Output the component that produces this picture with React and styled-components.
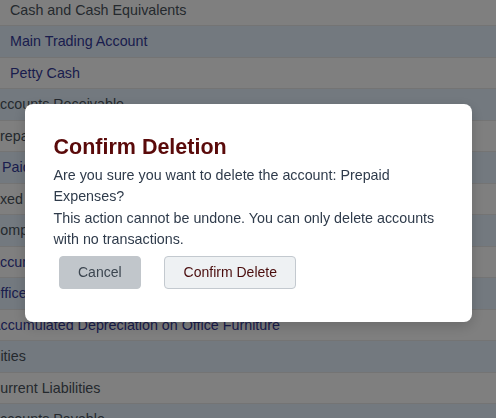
import React from 'react';
import styled, { createGlobalStyle } from 'styled-components';

const GlobalStyle = createGlobalStyle`
  html, body {
    margin: 0;
    padding: 0;
    overflow: hidden;
    background: #ffffff;
    font-family: "Liberation Sans", Arial, sans-serif;
  }
`;

const Page = styled.div`
  height: 418px;
  overflow: hidden;
`;

const AccountList = styled.ul`
  list-style: none;
  margin: -5.5px 0 0;
  padding: 0;
`;

const AccountRow = styled.li`
  box-sizing: border-box;
  height: 31.5px;
  padding: 6px 0;
  text-indent: ${(p) => p.$indent}px;
  border-bottom: 1px solid #e8e8e8;
  background: ${(p) => (p.$alt ? '#e6f3ff' : '#ffffff')};
  color: ${(p) => (p.$leaf ? '#343a9a' : '#4a535c')};
  font-size: 14.3px;
  line-height: 18.5px;
  white-space: nowrap;
  overflow: hidden;
`;

const Overlay = styled.div`
  position: fixed;
  inset: 0;
  display: flex;
  align-items: center;
  justify-content: center;
  padding-top: 7px;
  box-sizing: border-box;
  background: rgba(0, 0, 0, 0.5);
`;

const Dialog = styled.div`
  box-sizing: border-box;
  width: 447px;
  padding: 30px 29px 33px;
  background: #ffffff;
  border-radius: 8px;
  box-shadow: 0 4px 14px rgba(0, 0, 0, 0.18);
`;

const Title = styled.h2`
  margin: 0 0 5px;
  font-size: 21.5px;
  line-height: 26px;
  font-weight: bold;
  color: #5a0a0a;
`;

const Message = styled.p`
  margin: 0;
  font-size: 14.3px;
  line-height: 21.5px;
  color: #2f3b4b;
`;

const Actions = styled.div`
  display: flex;
  gap: 23px;
  margin-top: 5px;
  padding-left: 5px;
`;

const Button = styled.button`
  box-sizing: border-box;
  height: 33px;
  padding: 0 18.5px;
  font-family: "Liberation Sans", Arial, sans-serif;
  font-size: 14px;
  border-radius: 4px;
  cursor: pointer;
  border: 1px solid ${(p) => (p.$primary ? '#c3c9cf' : '#c1c6cb')};
  background: ${(p) => (p.$primary ? '#eef1f3' : '#c1c6cb')};
  color: ${(p) => (p.$primary ? '#4a0d0d' : '#3c4650')};
`;

const accounts = [
  { name: 'Cash and Cash Equivalents', indent: 10 },
  { name: 'Main Trading Account', indent: 10, leaf: true },
  { name: 'Petty Cash', indent: 10, leaf: true },
  { name: 'Accounts Receivable', indent: -9.5 },
  { name: 'Prepaid Expenses', indent: -9.5 },
  { name: 'Paid in Advance', indent: 2, leaf: true },
  { name: 'Fixed Assets', indent: -12 },
  { name: 'Computer Equipment', indent: -10 },
  { name: 'Accumulated Depreciation on Computer Equipment', indent: -9.5, leaf: true },
  { name: 'Office Furniture', indent: -10.5, leaf: true },
  { name: 'Accumulated Depreciation on Office Furniture', indent: -9, leaf: true },
  { name: 'Liabilities', indent: -33 },
  { name: 'Current Liabilities', indent: -10 },
  { name: 'Accounts Payable', indent: -9.5 },
];

export default function App() {
  return (
    <Page>
      <GlobalStyle />
      <AccountList>
        {accounts.map((a, i) => (
          <AccountRow key={a.name} $indent={a.indent} $alt={i % 2 === 1} $leaf={a.leaf}>
            {a.name}
          </AccountRow>
        ))}
      </AccountList>
      <Overlay>
        <Dialog>
          <Title>Confirm Deletion</Title>
          <Message>Are you sure you want to delete the account: Prepaid Expenses?</Message>
          <Message>This action cannot be undone. You can only delete accounts with no transactions.</Message>
          <Actions>
            <Button>Cancel</Button>
            <Button $primary>Confirm Delete</Button>
          </Actions>
        </Dialog>
      </Overlay>
    </Page>
  );
}
